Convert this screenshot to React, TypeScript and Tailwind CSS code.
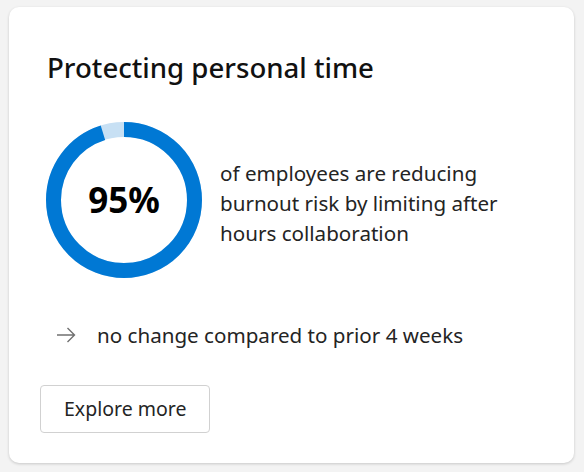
function Donut({ value }: { value: number }) {
  const r = 70.5;
  const c = 2 * Math.PI * r;
  const filled = (value / 100) * c;
  return (
    <div className="relative w-[156px] h-[156px] shrink-0">
      <svg width="156" height="156" viewBox="0 0 156 156" className="block">
        <circle cx="78" cy="78" r={r} fill="none" stroke="#c7e0f4" strokeWidth="15" />
        <circle
          cx="78"
          cy="78"
          r={r}
          fill="none"
          stroke="#0078d4"
          strokeWidth="15"
          strokeDasharray={`${filled} ${c}`}
          transform="rotate(-90 78 78)"
        />
      </svg>
      <div className="absolute inset-0 flex items-center justify-center text-[35px] font-bold text-black">
        {value}%
      </div>
    </div>
  );
}

function Arrow() {
  return (
    <svg width="20" height="16" viewBox="0 0 20 16" className="block shrink-0">
      <path d="M1 8 H18.5 M11.5 1 L18.5 8 L11.5 15" fill="none" stroke="#707070" strokeWidth="1.4" />
    </svg>
  );
}

export default function App() {
  return (
    <div
      className="w-[584px] h-[472px] bg-[#f3f3f3] pt-[7px] pl-[9px]"
      style={{ fontFamily: '"Noto Sans", "Open Sans", sans-serif' }}
    >
      <div className="w-[565px] h-[456px] bg-white rounded-[10px] shadow-[0_1px_3px_rgba(0,0,0,0.18)] pt-[42px] pl-[38px]">
        <h2 className="text-[27.6px] leading-[36px] font-medium text-[#111]">Protecting personal time</h2>

        <div className="flex items-start mt-[37px] ml-[-1px]">
          <Donut value={95} />
          <p className="ml-[18px] mt-[36px] text-[20.6px] leading-[30px] text-[#242424]">
            of employees are reducing
            <br />
            burnout risk by limiting after
            <br />
            hours collaboration
          </p>
        </div>

        <div className="flex items-center mt-[43px] ml-[9px]">
          <Arrow />
          <span className="ml-[21px] text-[20.6px] leading-[28px] text-[#242424]">
            no change compared to prior 4 weeks
          </span>
        </div>

        <button className="mt-[36px] ml-[-7px] h-[48px] px-[23px] rounded-[4px] border border-[#d1d1d1] bg-white text-[19.5px] text-[#242424]">
          Explore more
        </button>
      </div>
    </div>
  );
}
